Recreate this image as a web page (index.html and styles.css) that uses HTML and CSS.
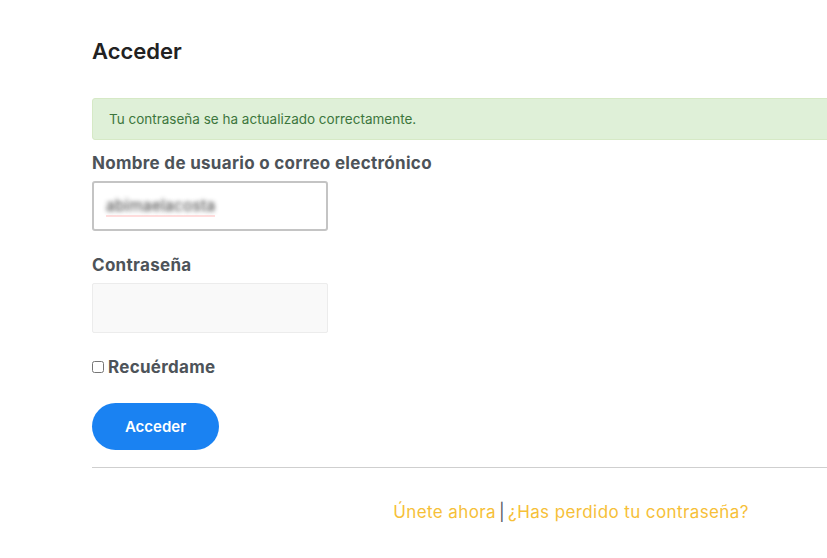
FILE: index.html
```html
<!DOCTYPE html>
<html lang="es">
<head>
    <meta charset="UTF-8">
    <meta name="viewport" content="width=device-width, initial-scale=1.0">
    <title>Acceder</title>
    <link rel="stylesheet" href="styles.css">
</head>
<body>

<div class="page">
<div class="container">
    <h2 class="title">Acceder</h2>

    <div class="alert-success">Tu contraseña se ha actualizado correctamente.</div>

    <form class="login-form">
        <label class="field-label" for="user">Nombre de usuario o correo electrónico</label>
        <div class="input-user"><span class="blurred">abimaelacosta</span></div>

        <label class="field-label" for="pass">Contraseña</label>
        <input type="password" id="pass" class="input-pass">

        <label class="remember"><input type="checkbox"> Recuérdame</label>

        <button type="button" class="btn-login">Acceder</button>
    </form>

    <hr class="divider">

    <p class="links">
        <a href="#">Únete ahora</a><span class="sep">|</span><a href="#">¿Has perdido tu contraseña?</a>
    </p>
</div>
</div>

</body>
</html>
```

FILE: styles.css
```css
/* login */
body {
    font-family: "Inter", "Noto Sans", sans-serif;
    margin: 0;
    padding: 0;
    background-color: #fff;
}
.page {
    width: 100%;
    overflow: hidden;
}
.container {
    width: 958px;
    margin-left: 92px;
    padding-top: 37px;
}
.title {
    font-size: 22px;
    font-weight: 600;
    color: #222;
    margin: 0 0 33px;
    line-height: 28px;
}
.alert-success {
    background-color: #dff0d8;
    border: 1px solid #d6e9c6;
    border-radius: 3px;
    color: #3c763d;
    font-size: 13.5px;
    line-height: 18px;
    padding: 11px 16px;
}
.login-form {
    display: flex;
    flex-direction: column;
    align-items: flex-start;
}
.field-label {
    font-size: 17px;
    font-weight: 700;
    letter-spacing: 0.3px;
    color: #4d5359;
    line-height: 22px;
    margin: 12px 0 7px;
}
.input-user {
    width: 236px;
    height: 50px;
    box-sizing: border-box;
    border: 2px solid #c4c4c4;
    border-radius: 3px;
    padding: 0 12px;
    display: flex;
    align-items: center;
    margin-bottom: 11px;
}
.blurred {
    font-size: 16px;
    color: transparent;
    text-shadow: 0 0 4px rgba(50, 50, 50, 0.9);
    border-bottom: 2px solid rgba(255, 120, 120, 0.25);
}
.input-pass {
    width: 236px;
    height: 50px;
    box-sizing: border-box;
    border: 1px solid #ececec;
    background-color: #f9f9f9;
    border-radius: 2px;
    margin: 0 0 23px;
}
.remember {
    font-size: 17px;
    font-weight: 700;
    letter-spacing: 0.3px;
    color: #4d5359;
    display: flex;
    align-items: center;
    gap: 2px;
    line-height: 22px;
}
.remember input {
    margin: 0 2px 0 0;
    width: 12px;
    height: 12px;
}
.btn-login {
    margin-top: 25px;
    background-color: #1a82f2;
    color: #fff;
    border: none;
    border-radius: 24px;
    width: 127px;
    height: 47px;
    font-family: inherit;
    font-size: 15px;
    font-weight: 600;
    cursor: pointer;
}
.divider {
    border: none;
    border-top: 1px solid #cfcfcf;
    margin: 17px 0 0;
}
.links {
    text-align: center;
    font-size: 17px;
    letter-spacing: 0.4px;
    margin: 32px 0 0;
    line-height: 24px;
}
.links a {
    color: #f6c038;
    text-decoration: none;
}
.sep {
    color: #555b63;
    margin: 0 3px;
}
```
